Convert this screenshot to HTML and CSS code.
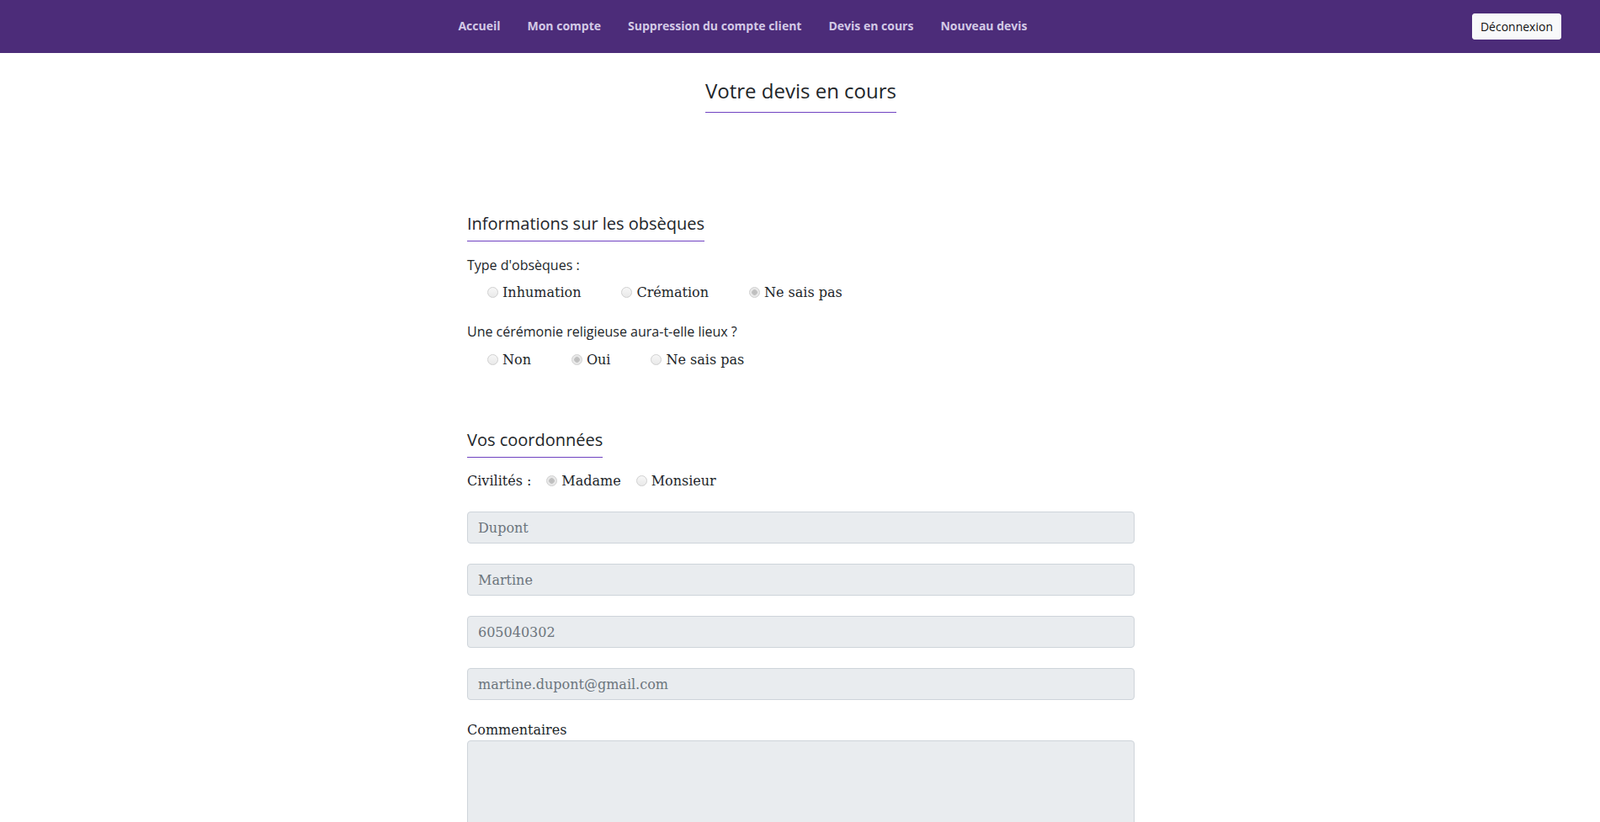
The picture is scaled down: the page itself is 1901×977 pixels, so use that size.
FILE: index.html
```html
<!DOCTYPE html>
<html lang="fr">
<head>
<meta charset="utf-8">
<title>Votre devis en cours</title>
<link rel="stylesheet" href="styles.css">
</head>
<body>
<header class="navbar">
  <ul class="nav-links">
    <li><a class="nav-link" href="#">Accueil</a></li>
    <li><a class="nav-link" href="#">Mon compte</a></li>
    <li><a class="nav-link" href="#">Suppression du compte client</a></li>
    <li><a class="nav-link" href="#">Devis en cours</a></li>
    <li><a class="nav-link" href="#">Nouveau devis</a></li>
  </ul>
  <button class="btn-logout" type="button">Déconnexion</button>
</header>

<main class="page">
  <h1 class="page-title"><span>Votre devis en cours</span></h1>

  <section class="section section-first">
    <h2 class="section-title"><span>Informations sur les obsèques</span></h2>

    <div class="question">
      <p class="question-label">Type d'obsèques :</p>
      <div class="options">
        <label class="option"><input class="radio" type="radio" name="type" disabled>Inhumation</label>
        <label class="option"><input class="radio" type="radio" name="type" disabled>Crémation</label>
        <label class="option"><input class="radio" type="radio" name="type" checked disabled>Ne sais pas</label>
      </div>
    </div>

    <div class="question">
      <p class="question-label">Une cérémonie religieuse aura-t-elle lieux ?</p>
      <div class="options">
        <label class="option"><input class="radio" type="radio" name="ceremonie" disabled>Non</label>
        <label class="option"><input class="radio" type="radio" name="ceremonie" checked disabled>Oui</label>
        <label class="option"><input class="radio" type="radio" name="ceremonie" disabled>Ne sais pas</label>
      </div>
    </div>
  </section>

  <section class="section section-second">
    <h2 class="section-title"><span>Vos coordonnées</span></h2>

    <div class="civility">
      <span class="civility-label">Civilités :</span>
      <label class="option"><input class="radio" type="radio" name="civ" checked disabled>Madame</label>
      <label class="option"><input class="radio" type="radio" name="civ" disabled>Monsieur</label>
    </div>

    <div class="form-group"><input class="field" type="text" value="Dupont" readonly></div>
    <div class="form-group"><input class="field" type="text" value="Martine" readonly></div>
    <div class="form-group"><input class="field" type="text" value="605040302" readonly></div>
    <div class="form-group"><input class="field" type="email" value="martine.dupont@gmail.com" readonly></div>

    <div class="form-group">
      <label class="field-label" for="comment">Commentaires</label>
      <textarea class="field field-area" id="comment" readonly></textarea>
    </div>
  </section>
</main>
</body>
</html>
```

FILE: styles.css
```css
html {
  scrollbar-width: none;
}

body {
  margin: 0;
  background: #ffffff;
  color: #212529;
  font-family: "Open Sans", "Noto Sans", sans-serif;
}

/* ---------- Navbar ---------- */
.navbar {
  height: 63px;
  box-sizing: border-box;
  padding: 0 46px 0 16px;
  background: #4c2c79;
  display: flex;
  align-items: center;
}

.nav-links {
  list-style: none;
  margin: 0 auto;
  padding: 0;
  display: flex;
}

.nav-link {
  display: block;
  padding: 7px 16px 9px;
  font-size: 14px;
  font-weight: 700;
  line-height: 21px;
  color: #d3c9e6;
  text-decoration: none;
}

.btn-logout {
  height: 31px;
  padding: 0 9px;
  border: 1px solid #f8f9fa;
  border-radius: 3px;
  background: #f8f9fa;
  color: #111111;
  font-family: "Open Sans", "Noto Sans", sans-serif;
  font-size: 14px;
  font-weight: 500;
  line-height: 21px;
}

/* ---------- Page ---------- */
.page {
  width: 793px;
  margin-left: calc(50% - 395.5px);
  padding-top: 30px;
}

.page-title {
  margin: 0;
  text-align: center;
  font-size: 24px;
  font-weight: 400;
  line-height: 29px;
}

.page-title span {
  display: inline-block;
  padding-bottom: 11px;
  border-bottom: 1px solid #6f42c1;
}

.section-first {
  margin-top: 120px;
}

.section-second {
  margin-top: 71px;
}

.section-title {
  margin: 0;
  font-size: 20px;
  font-weight: 400;
  line-height: 24px;
}

.section-title span {
  display: inline-block;
  padding-bottom: 8px;
  border-bottom: 1px solid #6f42c1;
}

.question {
  margin-top: 16px;
}

.question + .question {
  margin-top: 22px;
}

.question-label {
  margin: 0;
  font-size: 16px;
  line-height: 24px;
}

.options {
  margin-top: 9px;
  padding-left: 24px;
  display: flex;
  gap: 48px;
}

.question + .question .options {
  margin-top: 10px;
}

.option {
  font-family: "DejaVu Serif", "Liberation Serif", serif;
  font-size: 16px;
  line-height: 24px;
  color: #212529;
  white-space: nowrap;
}

.radio {
  appearance: none;
  -webkit-appearance: none;
  box-sizing: border-box;
  width: 13px;
  height: 13px;
  margin: 0 5px 0 0;
  border: 1px solid #cfcfcf;
  border-radius: 50%;
  background: linear-gradient(#f7f7f7, #e9e9e9);
  vertical-align: -1px;
}

.radio:checked {
  background: radial-gradient(circle, #bdbdbd 0, #c2c2c2 3px, #e6e6e6 3.6px, #eeeeee 100%);
}

.civility {
  margin: 16px 0 24px;
  display: flex;
  gap: 18px;
  font-family: "DejaVu Serif", "Liberation Serif", serif;
  font-size: 16px;
  line-height: 24px;
}

.form-group {
  margin-bottom: 24px;
}

.field {
  display: block;
  box-sizing: border-box;
  width: 100%;
  height: 38px;
  margin: 0;
  padding: 6px 12px;
  border: 1px solid #ced4da;
  border-radius: 4px;
  background: #e9ecef;
  color: #6c757d;
  font-family: "DejaVu Serif", "Liberation Serif", serif;
  font-size: 16px;
  line-height: 24px;
  outline: none;
}

.field-label {
  display: block;
  font-family: "DejaVu Serif", "Liberation Serif", serif;
  font-size: 16px;
  line-height: 24px;
}

.field-area {
  height: 180px;
  resize: none;
}
```
